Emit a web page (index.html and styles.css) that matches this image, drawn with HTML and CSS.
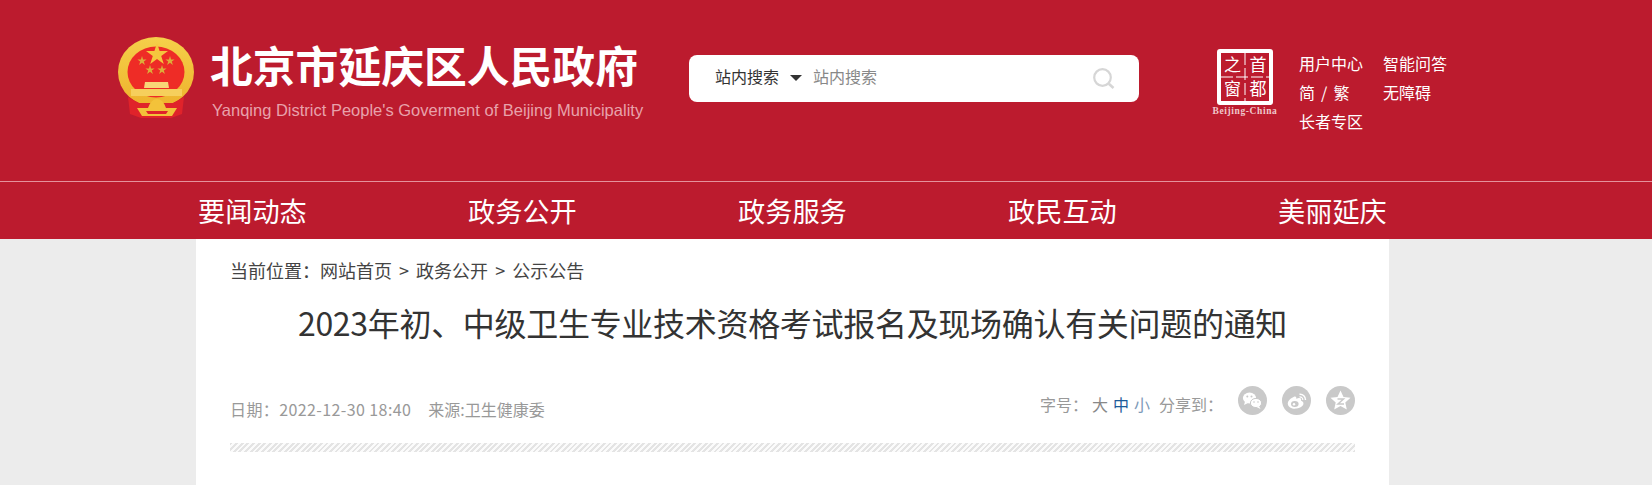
FILE: index.html
```html
<!DOCTYPE html>
<html lang="zh-CN">

<head>
    <meta charset="UTF-8">
    <title>2023年初、中级卫生专业技术资格考试报名及现场确认有关问题的通知</title>
    <link rel="stylesheet" href="styles.css">
</head>

<body>
    <header class="top">
        <div class="brand">
            <svg class="emblem" viewBox="0 0 78 82" width="78" height="82">
                <defs>
                    <linearGradient id="gold" x1="0" y1="0" x2="0" y2="1">
                        <stop offset="0" stop-color="#f5d04a" />
                        <stop offset="1" stop-color="#eeb22c" />
                    </linearGradient>
                </defs>
                <ellipse cx="39" cy="35" rx="38" ry="35" fill="url(#gold)" />
                <ellipse cx="39" cy="35" rx="28.5" ry="25.5" fill="#ee2c26" />
                <polygon fill="#f5c63e" points="40,6 42.6,14 51,14 44.2,18.9 46.8,27 40,22 33.2,27 35.8,18.9 29,14 37.4,14" />
                <polygon fill="#dcae3a" points="25,19 26.1,22.4 29.6,22.4 26.8,24.5 27.9,27.9 25,25.8 22.1,27.9 23.2,24.5 20.4,22.4 23.9,22.4" />
                <polygon fill="#dcae3a" points="53,19 54.1,22.4 57.6,22.4 54.8,24.5 55.9,27.9 53,25.8 50.1,27.9 51.2,24.5 48.4,22.4 51.9,22.4" />
                <polygon fill="#dcae3a" points="33,28 34.1,31.4 37.6,31.4 34.8,33.5 35.9,36.9 33,34.8 30.1,36.9 31.2,33.5 28.4,31.4 31.9,31.4" />
                <polygon fill="#dcae3a" points="45,28 46.1,31.4 49.6,31.4 46.8,33.5 47.9,36.9 45,34.8 42.1,36.9 43.2,33.5 40.4,31.4 43.9,31.4" />
                <path d="M28 45 H51 L52 51 H27 Z" fill="#f8d777" />
                <path d="M14 52 H65 V59 H14 Z" fill="#f6cf5c" />
                <path d="M11 60 L22 66 H56 L67 60 L65 77 L54 81 H24 L13 77 Z" fill="#e0232a" />
                <path d="M20 71 L31 71 Q34 62 40 62 Q46 62 49 71 L60 71 L55 79 H25 Z" fill="#f3c23a" />
                <path d="M29 74 H51 L49 77 H31 Z" fill="#e0232a" />
            </svg>
            <div class="brand-text">
                <div class="site-name">北京市延庆区人民政府</div>
                <div class="site-en">Yanqing District People's Goverment of Beijing Municipality</div>
            </div>
        </div>

        <div class="search">
            <span class="search-scope">站内搜索</span>
            <span class="caret"></span>
            <span class="search-input">站内搜索</span>
            <svg class="search-icon" viewBox="0 0 22 22" width="22" height="22">
                <circle cx="9.5" cy="9.5" r="8.3" fill="none" stroke="#d6d6d6" stroke-width="2.2" />
                <path d="M15.8 15.8 L20.5 20" stroke="#d6d6d6" stroke-width="2.6" fill="none" />
            </svg>
        </div>

        <div class="capital">
            <svg class="capital-mark" viewBox="0 0 56 56" width="56" height="56">
                <rect x="2" y="2" width="52" height="52" rx="1" fill="none" stroke="#fff" stroke-width="4" />
                <path d="M28 4 V52 M4 28 H52" stroke="#fff" stroke-width="1" stroke-dasharray="12 3" />
                <text x="15.5" y="22" class="mark-char">之</text>
                <text x="41" y="22" class="mark-char">首</text>
                <text x="15.5" y="46" class="mark-char">窗</text>
                <text x="41" y="46" class="mark-char">都</text>
            </svg>
            <span class="capital-en">Beijing-China</span>
        </div>

        <div class="quick-links">
            <a>用户中心</a>
            <a>智能问答</a>
            <a class="lang-switch">简 / 繁</a>
            <a>无障碍</a>
            <a>长者专区</a>
        </div>
    </header>

    <nav class="nav">
        <a>要闻动态</a>
        <a>政务公开</a>
        <a>政务服务</a>
        <a>政民互动</a>
        <a>美丽延庆</a>
    </nav>

    <main class="content">
        <div class="crumbs">当前位置：<a>网站首页</a> <span class="sep">&gt;</span> <a>政务公开</a> <span class="sep">&gt;</span> <a>公示公告</a></div>
        <h1 class="article-title">2023年初、中级卫生专业技术资格考试报名及现场确认有关问题的通知</h1>
        <div class="meta">
            <div class="meta-left">
                <span class="date">日期：2022-12-30 18:40</span>
                <span>来源:卫生健康委</span>
            </div>
            <div class="meta-right">
                <span class="font-label">字号：</span>
                <a class="size">大</a>
                <a class="size size-on">中</a>
                <a class="size size-small">小</a>
                <span class="share-label">分享到：</span>
                <svg class="share" viewBox="0 0 29 29" width="29" height="29">
                    <circle cx="14.5" cy="14.5" r="14.5" fill="#c9c9c9" />
                    <ellipse cx="11.5" cy="12" rx="6.6" ry="5.4" fill="#fff" />
                    <path d="M7 15.5 L6 19 L10 17 Z" fill="#fff" />
                    <ellipse cx="18" cy="17" rx="5.6" ry="4.6" fill="#fff" stroke="#c9c9c9" stroke-width="1" />
                    <path d="M21 20 L22.5 23 L18.5 21 Z" fill="#fff" />
                    <circle cx="9.3" cy="10.5" r="1" fill="#c9c9c9" />
                    <circle cx="13.5" cy="10.5" r="1" fill="#c9c9c9" />
                    <circle cx="16" cy="16" r=".8" fill="#c9c9c9" />
                    <circle cx="20" cy="16" r=".8" fill="#c9c9c9" />
                </svg>
                <svg class="share" viewBox="0 0 29 29" width="29" height="29">
                    <circle cx="14.5" cy="14.5" r="14.5" fill="#c9c9c9" />
                    <path d="M12.5 10.5 C8.5 12 5.5 15 5.8 18 C6.2 21.5 10.5 23.2 14.5 22.6 C18.8 22 21.8 19.6 21.4 17 C21.2 15.5 19.8 15 19 14.7 C19.6 13.2 19 11.8 16.8 12 L14.2 12.8 C14.6 11 13.8 10.2 12.5 10.5 Z" fill="#fff" />
                    <ellipse cx="12.8" cy="18" rx="3.8" ry="3" fill="#c9c9c9" />
                    <circle cx="12" cy="18.2" r="1.2" fill="#fff" />
                    <path d="M17.5 8.2 A5.5 5.5 0 0 1 23.5 14" fill="none" stroke="#fff" stroke-width="1.5" />
                    <path d="M17.5 10.8 A3 3 0 0 1 20.8 14" fill="none" stroke="#fff" stroke-width="1.2" />
                </svg>
                <svg class="share" viewBox="0 0 29 29" width="29" height="29">
                    <circle cx="14.5" cy="14.5" r="14.5" fill="#c9c9c9" />
                    <polygon points="14.5,4.5 17.5,11 24.5,11.8 19.3,16.5 20.8,23.5 14.5,20 8.2,23.5 9.7,16.5 4.5,11.8 11.5,11" fill="#fff" />
                    <path d="M11.5 13 H17.5 L12 18 H18" fill="none" stroke="#c9c9c9" stroke-width="1.5" />
                </svg>
            </div>
        </div>
        <div class="hatch"></div>
    </main>
</body>

</html>
```

FILE: styles.css
```css
body {
    margin: 0;
    height: 485px;
    overflow: hidden;
    background-color: #ececec;
    font-family: "Noto Sans CJK SC", "Liberation Sans", sans-serif;
    color: #333;
}

a {
    color: inherit;
    text-decoration: none;
}

.top {
    height: 181px;
    box-sizing: border-box;
    display: flex;
    align-items: flex-start;
    padding: 37px 0 0 117px;
    background-color: #bc1b2e;
    color: #fff;
}

.brand {
    display: flex;
    width: 572px;
}

.emblem {
    flex: none;
}

.brand-text {
    margin-left: 15px;
}

.site-name {
    margin-top: 2px;
    font-size: 42.8px;
    font-weight: 700;
    line-height: 50px;
    white-space: nowrap;
}

.site-en {
    margin: 11px 0 0 2px;
    font-family: "Liberation Sans", sans-serif;
    font-size: 16.5px;
    line-height: 20px;
    color: #e8a2ab;
    white-space: nowrap;
}

.search {
    width: 450px;
    height: 47px;
    margin-top: 18px;
    display: flex;
    align-items: center;
    padding: 0 24px 0 26px;
    box-sizing: border-box;
    background-color: #fff;
    border-radius: 8px;
    font-size: 16px;
    color: #333;
}

.search-scope,
.search-input {
    padding-bottom: 5px;
}

.caret {
    margin: 0 0 2px 11px;
    border-top: 6px solid #333;
    border-left: 6px solid transparent;
    border-right: 6px solid transparent;
}

.search-input {
    flex: 1;
    margin-left: 11px;
    color: #888;
}

.capital {
    width: 62px;
    margin: 12px 0 0 75px;
    display: flex;
    flex-direction: column;
    align-items: center;
}

.capital-mark {
    display: block;
}

.mark-char {
    font-size: 17px;
    fill: #fff;
    text-anchor: middle;
}

.capital-en {
    margin-top: 1px;
    font-family: "Liberation Serif", serif;
    font-size: 9.5px;
    font-weight: 700;
    letter-spacing: .6px;
    line-height: 10px;
    color: #f0c8cc;
    white-space: nowrap;
}

.quick-links {
    margin: 11px 0 0 23px;
    display: grid;
    grid-template-columns: 84px 70px;
    grid-auto-rows: 29px;
    align-items: center;
    font-size: 16px;
    white-space: nowrap;
}

.lang-switch {
    word-spacing: 2.5px;
}

.nav {
    height: 57px;
    display: flex;
    padding-left: 198px;
    border-top: 1px solid #e5929c;
    background-color: #bc1b2e;
    color: #fff;
    font-size: 27.2px;
    line-height: 57px;
}

.nav a {
    width: 270px;
}

.content {
    width: 1193px;
    height: 246px;
    margin-left: 196px;
    padding: 0 34px;
    box-sizing: border-box;
    background-color: #fff;
}

.crumbs {
    padding-top: 18px;
    font-size: 18px;
    line-height: 26px;
    color: #444;
}

.sep {
    margin: 0 3px;
}

.article-title {
    margin: 15px 0 0;
    font-size: 32px;
    font-weight: 400;
    letter-spacing: -.3px;
    line-height: 48px;
    text-align: center;
    color: #333;
}

.meta {
    margin-top: 40px;
    display: flex;
    justify-content: space-between;
    height: 57px;
    font-size: 16px;
    color: #999;
}

.meta-left {
    display: flex;
    gap: 17px;
    padding-top: 11px;
    line-height: 24px;
}

.date {
    letter-spacing: .4px;
}

.meta-right {
    display: flex;
    align-items: flex-start;
    line-height: 24px;
}

.font-label,
.size,
.share-label {
    margin-top: 6px;
}

.size {
    margin-left: 5px;
    color: #888;
}

.font-label + .size {
    margin-left: 4px;
}

.size-on {
    color: #1d5b99;
}

.size-small {
    color: #7d9ab8;
}

.share-label {
    margin: 6px 0 0 9px;
}

.share {
    margin-left: 15px;
}

.hatch {
    height: 9px;
    background: repeating-linear-gradient(135deg, #e4e4e4 0, #e4e4e4 2px, #fbfbfb 2px, #fbfbfb 4px);
}
```
